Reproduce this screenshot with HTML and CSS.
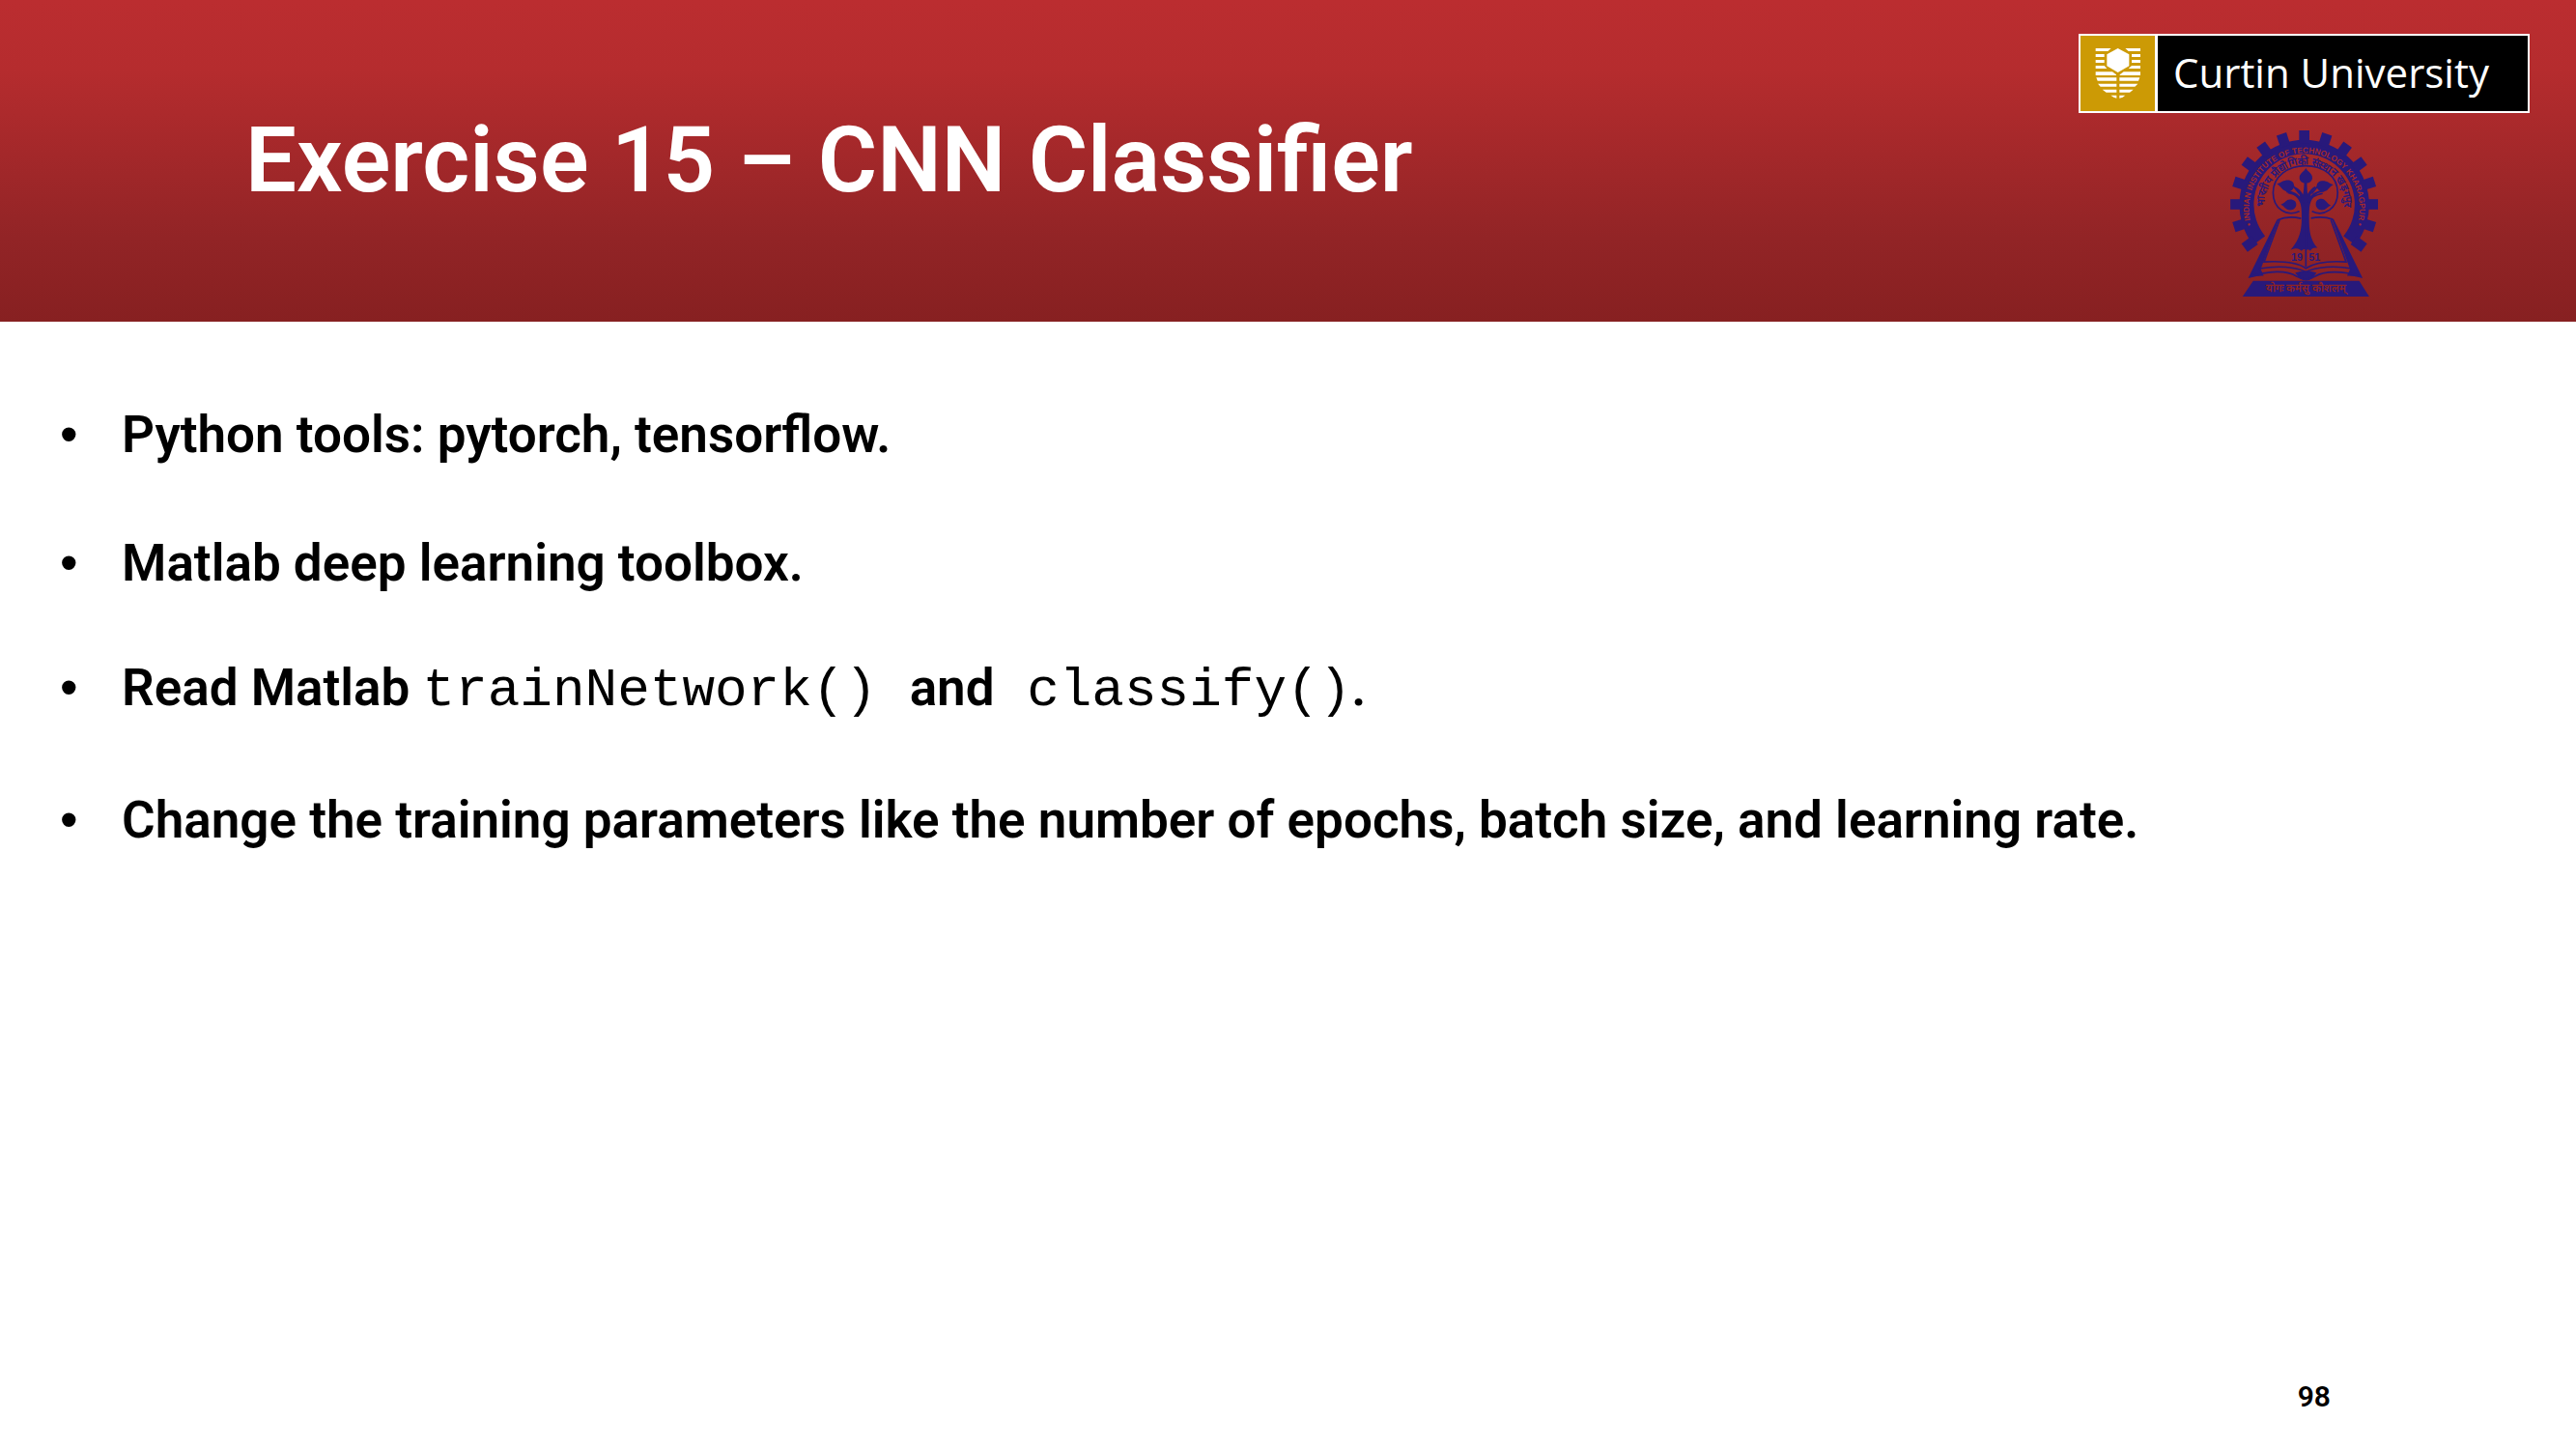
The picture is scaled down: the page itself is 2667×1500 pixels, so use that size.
FILE: index.html
```html
<!DOCTYPE html>
<html lang="en">
<head>
<meta charset="utf-8">
<title>Exercise 15 – CNN Classifier</title>
<link rel="stylesheet" href="styles.css">
</head>
<body>
<main class="slide">
  <header class="banner">
    <h1 class="title">Exercise 15 – CNN Classifier</h1>
    <div class="logos">
      <div class="curtin">
        <div class="curtin-mark">
          <svg class="shield" viewBox="116 90 144 162" aria-hidden="true">
            <path d="M118 93h48l-10 9h-38zM210 93h47v9h-37zM118 111h27v9h-27zM230 111h27v9h-27zM118 129h27v9h-27zM230 129h27v9h-27zM118 147h27l8 9h-35zM230 147h27v9h-37zM118 166h52l12 9v2h-64zM205 166h52v11h-64v-2zM120 184h63v10h-59zM192 184h63l-4 10h-59zM125 203h58v9h-50zM192 203h57l-9 9h-48zM139 221h44v9h-32zM192 221h43l-11 9h-32zM165 239h18v9q-9-2-18-9zM192 239h18q-7 7-18 9z"/>
            <path d="M187 93l35 19v36l-35 20-34-20v-36z"/>
          </svg>
        </div>
        <div class="curtin-name">Curtin University</div>
      </div>
      <svg class="crest" viewBox="57 44 459 517" role="img" aria-label="Indian Institute of Technology Kharagpur">
        <defs>
          <path id="arc-outer" d="M137 370A172 172 0 1 1 437 370"/>
          <path id="arc-inner" d="M164 298A125 125 0 1 1 410 298"/>
          <path id="tooth" d="M271 44h32v40h-32z"/>
        </defs>
        <g class="ink">
          <path d="M128 400A202 202 0 1 1 446 400L409 373A157 157 0 1 0 165 373z"/>
          <use href="#tooth"/>
          <use href="#tooth" transform="rotate(18 287 274)"/>
          <use href="#tooth" transform="rotate(36 287 274)"/>
          <use href="#tooth" transform="rotate(54 287 274)"/>
          <use href="#tooth" transform="rotate(72 287 274)"/>
          <use href="#tooth" transform="rotate(90 287 274)"/>
          <use href="#tooth" transform="rotate(108 287 274)"/>
          <use href="#tooth" transform="rotate(126 287 274)"/>
          <use href="#tooth" transform="rotate(-18 287 274)"/>
          <use href="#tooth" transform="rotate(-36 287 274)"/>
          <use href="#tooth" transform="rotate(-54 287 274)"/>
          <use href="#tooth" transform="rotate(-72 287 274)"/>
          <use href="#tooth" transform="rotate(-90 287 274)"/>
          <use href="#tooth" transform="rotate(-108 287 274)"/>
          <use href="#tooth" transform="rotate(-126 287 274)"/>
          <path d="M128 512h330l31 49H95z"/>
          <path d="M279 315c0-32-2-44-12-58-9-12-18-18-36-20l1-5c16 0 30 5 42 19-3-14-8-21-18-27l3-4c11 6 19 13 24 24 2-10 3-20 4-40h8c1 20 1 30 3 38 5-10 12-18 22-24l4 4c-10 8-15 15-18 27 12-14 26-19 43-19v5c-18 2-28 8-36 20-9 14-11 28-11 60 0 45 4 68 26 95-12-2-17 1-22 9-6-6-10-6-13-1-4-6-8-5-15 1-7-9-15-10-33-4 25-30 34-55 34-100z"/>
          <path d="M292 161c5 11 20 16 20 30 0 10-8 17-20 17s-20-7-20-17c0-14 15-19 20-30z"/>
          <path d="M202 211c14-5 20-12 34-12 12 0 19 7 19 17 0 11-8 18-19 18-17 0-20-15-34-23zM377 213c-14-5-18-12-32-12-12 0-19 6-19 16s8 17 19 17c17 0 18-14 32-21zM214 275c14-5 16-16 29-16s19 7 19 16-8 17-19 17c-15 0-17-12-29-17zM370 277c-14-5-16-20-30-20-11 0-17 7-17 17s8 18 19 18c14 0 16-10 28-15z"/>
        </g>
        <g class="line">
          <path d="M272 296c-42 18-82-10-82-58 0-52 46-84 101-84s100 32 100 84c0 48-42 76-80 58"/>
          <path d="M252 216l20 25M330 216l-20 25M236 238c30 6 42 16 50 32M344 240c-26 6-36 12-44 28"/>
        </g>
        <g class="page">
          <path class="fill" d="M204 323L117 500q22-6 40-6l-8-18z"/>
          <path class="fill" d="M376 321L464 500q-22-6-40-6l8-18z"/>
          <path d="M204 323c26-12 50-10 73-5M308 317c28-5 46-4 68 4M210 323l-48 130c52-3 100-1 130 20 32-21 80-23 125-20L370 323M149 474c56-10 110-6 143 10 33-16 90-20 143-10M117 500c58-20 116-22 146-2 20 12 38 12 58 0 28-18 86-18 143 0M292 318v150"/>
          <path class="fill" d="M263 488q29-8 58 0l-10 14q-18 14-37 0z"/>
        </g>
        <text class="ring-text"><textPath href="#arc-outer" startOffset="50%" text-anchor="middle">• INDIAN INSTITUTE OF TECHNOLOGY KHARAGPUR •</textPath></text>
        <text class="hindi"><textPath href="#arc-inner" startOffset="50%" text-anchor="middle">भारतीय प्रौद्योगिकी संस्थान खड़गपुर</textPath></text>
        <text class="year" x="246" y="451">19</text>
        <text class="year" x="301" y="451">51</text>
        <text class="motto" x="292" y="546" text-anchor="middle">योगः कर्मसु कौशलम्</text>
      </svg>
    </div>
  </header>
  <ul class="points">
    <li>Python tools: pytorch, tensorflow.</li>
    <li>Matlab deep learning toolbox.</li>
    <li class="with-code">Read Matlab <code>trainNetwork() </code>and<code> classify()</code>.</li>
    <li>Change the training parameters like the number of epochs, batch size, and learning rate.</li>
  </ul>
  <footer class="page-number">98</footer>
</main>
</body>
</html>
```
FILE: styles.css
```css
* {
  box-sizing: border-box;
}

body {
  margin: 0;
  background: #fff;
  color: #000;
  font-family: Roboto, "Liberation Sans", sans-serif;
  font-weight: 600;
}

.slide {
  display: flex;
  flex-direction: column;
  min-height: 100vh;
}

.banner {
  display: flex;
  align-items: center;
  justify-content: space-between;
  padding: 35px 48px 26px 254px;
  background: linear-gradient(#bb2d30, #b52c2e 22%, #922426 74%, #872021);
}

.title {
  margin: 0;
  padding-bottom: 10px;
  color: #fff;
  font-size: 94px;
  font-weight: 600;
  line-height: 120px;
}

.logos {
  display: flex;
  flex-direction: column;
  align-items: center;
  gap: 18px;
}

.curtin {
  display: flex;
  gap: 3px;
  padding: 2px;
  background: #fff;
}

.curtin-mark {
  display: flex;
  align-items: center;
  justify-content: center;
  width: 77px;
  height: 78px;
  background: #cc9a05;
}

.shield {
  width: 48px;
  height: 54px;
  fill: #fff;
}

.curtin-name {
  width: 383px;
  padding-left: 16px;
  background: #000;
  color: #fff;
  font-family: "Open Sans", sans-serif;
  font-size: 42px;
  font-weight: 400;
  line-height: 76px;
}

.crest {
  display: block;
  width: 153px;
  height: 172px;
}

.ink {
  fill: #28197b;
}

.line,
.page {
  fill: none;
  stroke: #28197b;
  stroke-width: 5;
}

.page .fill {
  fill: #28197b;
}

.ring-text {
  fill: #a3292b;
  font-family: "Liberation Sans", sans-serif;
  font-size: 25px;
  font-weight: 700;
}

.hindi {
  fill: #28197b;
  font-size: 33px;
}

.year {
  fill: #28197b;
  font-family: "Liberation Sans", sans-serif;
  font-size: 32px;
  font-weight: 700;
}

.motto {
  fill: #8c2224;
  font-size: 34px;
}

.points {
  margin: 0;
  padding: 51px 48px 0 62px;
  list-style: none;
  font-size: 53px;
  line-height: 133px;
}

.points li {
  display: flex;
  align-items: baseline;
  white-space: pre;
}

.points li::before {
  content: "•";
  width: 64px;
  font-family: "Liberation Sans", sans-serif;
  font-weight: 400;
  line-height: 1;
}

.points .with-code {
  padding-bottom: 8px;
  line-height: 125px;
}

.points code {
  font-family: "Liberation Mono", monospace;
  font-size: 56px;
  font-weight: 400;
  line-height: 1;
}

.page-number {
  margin-top: auto;
  padding: 0 254px 34px 0;
  font-size: 30px;
  line-height: 40px;
  text-align: right;
}
```
